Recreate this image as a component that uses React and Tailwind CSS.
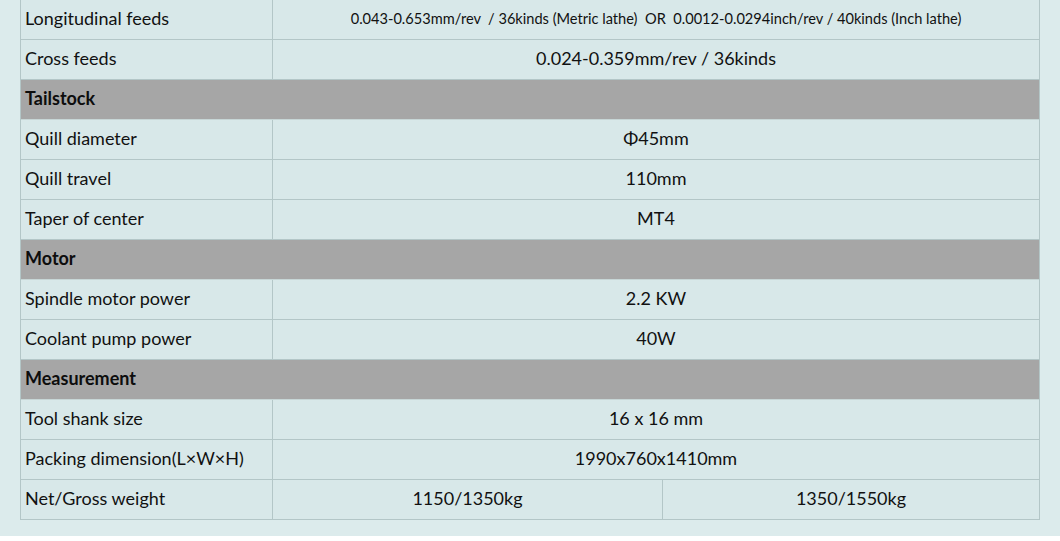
const rows = [
  { label: 'Longitudinal feeds', value: '0.043-0.653mm/rev  / 36kinds (Metric lathe)  OR  0.0012-0.0294inch/rev / 40kinds (Inch lathe)', small: true },
  { label: 'Cross feeds', value: '0.024-0.359mm/rev / 36kinds' },
  { section: 'Tailstock' },
  { label: 'Quill diameter', value: 'Φ45mm' },
  { label: 'Quill travel', value: '110mm' },
  { label: 'Taper of center', value: 'MT4' },
  { section: 'Motor' },
  { label: 'Spindle motor power', value: '2.2 KW' },
  { label: 'Coolant pump power', value: '40W' },
  { section: 'Measurement' },
  { label: 'Tool shank size', value: '16 x 16 mm' },
  { label: 'Packing dimension(L×W×H)', value: '1990x760x1410mm' },
  { label: 'Net/Gross weight', values: ['1150/1350kg', '1350/1550kg'] },
];

export default function App() {
  return (
    <div
      className="w-[1060px] h-[541px] overflow-hidden bg-white"
      style={{ fontFamily: 'Lato, "Open Sans", sans-serif' }}
    >
      <div className="h-[536px] bg-[#dcebec] pl-[20px] pr-[20px]">
        <div className="border-l border-r border-[#b3c6c7] bg-[#d8e8e9] text-[#111]">
          {rows.map((r, i) =>
            r.section ? (
              <div
                key={i}
                className="h-10 flex items-center pl-[4px] pb-[2px] bg-[#a6a6a6] border-b border-[#c7d6d6] font-bold text-[18px] text-[#0d0d0d]"
              >
                {r.section}
              </div>
            ) : (
              <div key={i} className="h-10 flex border-b border-[#b3c6c7]">
                <div className="w-[252px] shrink-0 flex items-center pl-[4px] pb-[2px] border-r border-[#b3c6c7] text-[18px]">
                  {r.label}
                </div>
                {r.values ? (
                  <>
                    <div className="w-[390px] flex items-center justify-center pb-[2px] border-r border-[#b3c6c7] text-[18px]">
                      {r.values[0]}
                    </div>
                    <div className="flex-1 flex items-center justify-center pb-[2px] text-[18px]">
                      {r.values[1]}
                    </div>
                  </>
                ) : (
                  <div
                    className={
                      'flex-1 flex items-center justify-center pb-[2px] whitespace-pre ' +
                      (r.small ? 'text-[14.6px]' : 'text-[18px]')
                    }
                  >
                    {r.value}
                  </div>
                )}
              </div>
            )
          )}
        </div>
      </div>
    </div>
  );
}
